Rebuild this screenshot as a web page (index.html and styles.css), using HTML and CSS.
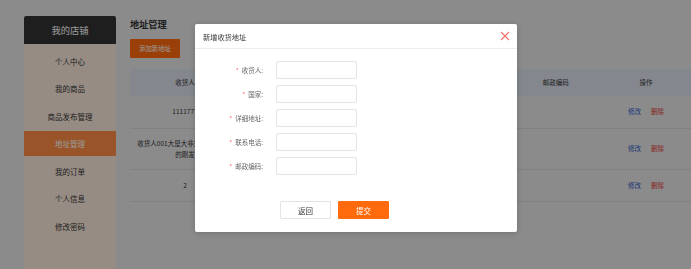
FILE: index.html
```html
<!DOCTYPE html>
<html lang="zh-CN">
<head>
    <meta charset="UTF-8">
    <meta name="viewport" content="width=device-width, initial-scale=1.0">
    <title>地址管理</title>
    <link rel="stylesheet" href="styles.css">
</head>
<body>
    <div class="page">
        <aside class="side">
            <div class="side-head">我的店铺</div>
            <ul class="side-menu">
                <li>个人中心</li>
                <li>我的商品</li>
                <li>商品发布管理</li>
                <li class="active">地址管理</li>
                <li>我的订单</li>
                <li>个人信息</li>
                <li>修改密码</li>
            </ul>
        </aside>

        <main class="main">
            <h2 class="title">地址管理</h2>
            <button class="add-btn">添加新地址</button>

            <table class="addr-table">
                <colgroup>
                    <col class="col-first">
                    <col><col><col><col><col>
                </colgroup>
                <thead>
                    <tr>
                        <th>收货人</th>
                        <th>国家</th>
                        <th>详细地址</th>
                        <th>联系电话</th>
                        <th>邮政编码</th>
                        <th>操作</th>
                    </tr>
                </thead>
                <tbody>
                    <tr class="row">
                        <td>1111777</td>
                        <td>中国</td>
                        <td>北京市</td>
                        <td>138000</td>
                        <td></td>
                        <td><a class="edit">修改</a><a class="del">删除</a></td>
                    </tr>
                    <tr class="row">
                        <td>收货人001大是大非对对对错错错的刚发</td>
                        <td>中国</td>
                        <td>上海市</td>
                        <td>139000</td>
                        <td></td>
                        <td><a class="edit">修改</a><a class="del">删除</a></td>
                    </tr>
                    <tr class="row">
                        <td>2</td>
                        <td>中国</td>
                        <td>2</td>
                        <td>2</td>
                        <td></td>
                        <td><a class="edit">修改</a><a class="del">删除</a></td>
                    </tr>
                </tbody>
            </table>
        </main>
    </div>

    <div class="mask"></div>

    <div class="dialog">
        <div class="dialog-head">
            <span class="dialog-title">新增收货地址</span>
            <svg class="dialog-close" width="10" height="10" viewBox="0 0 10 10">
                <path d="M1 1L9 9M9 1L1 9" stroke="#f0736b" stroke-width="1.1" fill="none"/>
            </svg>
        </div>
        <form class="dialog-form">
            <div class="form-row">
                <label><em>*</em>收货人:</label>
                <input type="text">
            </div>
            <div class="form-row">
                <label><em>*</em>国家:</label>
                <input type="text">
            </div>
            <div class="form-row">
                <label><em>*</em>详细地址:</label>
                <input type="text">
            </div>
            <div class="form-row">
                <label><em>*</em>联系电话:</label>
                <input type="text">
            </div>
            <div class="form-row">
                <label><em>*</em>邮政编码:</label>
                <input type="text">
            </div>
            <div class="form-btns">
                <button type="button" class="btn-back">返回</button>
                <button type="button" class="btn-submit">提交</button>
            </div>
        </form>
    </div>
</body>
</html>
```

FILE: styles.css
```css
:root {
    --orange: #ff6a0c;
    --text-color: #333333;
    --side-bg: #fbeadb;
    --page-bg: #e8e8e8;
}

* {
    margin: 0;
    padding: 0;
    box-sizing: border-box;
}

body {
    font-family: "Noto Sans CJK SC", "Noto Sans", sans-serif;
    background: var(--page-bg);
    color: var(--text-color);
    height: 269px;
    overflow: hidden;
}

.page {
    display: flex;
    gap: 14px;
    padding: 16px 0 0 24px;
    height: 100vh;
}

/* 左侧菜单 */
.side {
    width: 92px;
    flex-shrink: 0;
    background: var(--side-bg);
}

.side-head {
    height: 28px;
    line-height: 28px;
    background: #333;
    color: #fff;
    text-align: center;
    font-size: 9.3px;
    border-radius: 2px 2px 0 0;
}

.side-menu {
    list-style: none;
    display: flex;
    flex-direction: column;
    gap: 2.5px;
    padding-top: 4.5px;
}

.side-menu li {
    height: 25px;
    line-height: 25px;
    text-align: center;
    font-size: 7.5px;
}

.side-menu li.active {
    background: #ff8d45;
    color: #fff;
}

/* 内容区 */
.main {
    flex: 1;
    min-width: 0;
}

.title {
    font-size: 9.2px;
    font-weight: 700;
    line-height: 16px;
}

.add-btn {
    display: block;
    margin-top: 7px;
    width: 50px;
    height: 19px;
    border: none;
    border-radius: 1px;
    background: var(--orange);
    color: #fff;
    font-family: inherit;
    font-size: 6.4px;
}

.addr-table {
    width: 561px;
    margin-top: 11px;
    border-collapse: collapse;
    table-layout: fixed;
    font-size: 6.5px;
    line-height: 11px;
}

.addr-table .col-first {
    width: 110px;
}

.addr-table th {
    height: 27px;
    background: #dde2ec;
    font-weight: 400;
    text-align: center;
}

.addr-table td {
    padding: 0 5px;
    text-align: center;
    border-bottom: 1px solid #d8d8d8;
    height: 32px;
    word-break: break-all;
}

.addr-table tr:nth-child(2) td {
    height: 41px;
}

.addr-table a {
    margin: 0 5px;
}

.edit {
    color: #2f59c9;
}

.del {
    color: #e43b3b;
}

/* 弹窗 */
.mask {
    position: fixed;
    inset: 0;
    background: rgba(0, 0, 0, 0.4);
}

.dialog {
    position: fixed;
    left: 195px;
    top: 24px;
    width: 322px;
    height: 208px;
    background: #fff;
    border-radius: 2px;
    box-shadow: 0 1px 6px rgba(0, 0, 0, 0.2);
}

.dialog-head {
    height: 25px;
    border-bottom: 1px solid #eee;
    display: flex;
    align-items: center;
    justify-content: space-between;
    padding: 0 7px 0 8px;
}

.dialog-title {
    font-size: 7.2px;
    color: #333;
    margin-top: 1px;
}

.dialog-close {
    margin-bottom: 1px;
}

.dialog-form {
    display: flex;
    flex-direction: column;
    gap: 6px;
    padding-top: 12px;
}

.form-row {
    display: grid;
    grid-template-columns: 68px 81px;
    column-gap: 13px;
    align-items: center;
}

.form-row label {
    text-align: right;
    font-size: 6.5px;
    color: #666;
}

.form-row em {
    font-style: normal;
    color: #f56c6c;
    margin-right: 3px;
}

.form-row input {
    height: 18px;
    border: 1px solid #e4e4e4;
    border-radius: 2px;
    background: #fff;
}

.form-btns {
    display: flex;
    gap: 7px;
    padding-left: 85px;
    margin-top: 20px;
}

.form-btns button {
    width: 51px;
    height: 18px;
    font-family: inherit;
    font-size: 7.5px;
    border-radius: 1px;
}

.btn-back {
    background: #fff;
    border: 1px solid #e4e4e4;
    color: #333;
}

.btn-submit {
    background: var(--orange);
    border: 1px solid var(--orange);
    color: #fff;
}
```
